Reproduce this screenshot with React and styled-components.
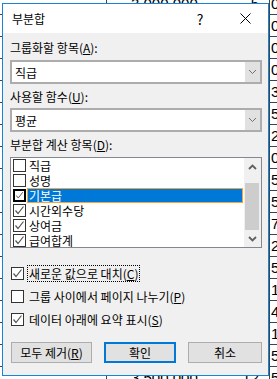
import React from 'react';
import styled, { createGlobalStyle } from 'styled-components';

const Global = createGlobalStyle`
  html, body { margin: 0; padding: 0; }
  body {
    width: 277px;
    height: 379px;
    overflow: hidden;
    background: #fff;
    font-family: "Noto Sans CJK KR", "Noto Sans", sans-serif;
  }
`;

const Screen = styled.div`
  position: relative;
  width: 277px;
  height: 379px;
  overflow: hidden;
  background: #fff;
`;

/* spreadsheet behind the dialog */
const Sheet = styled.div`
  display: flex;
  flex-direction: column;
  margin-top: -7px;
  font-family: "Liberation Sans", Arial, sans-serif;
  font-size: 15px;
  color: #000;
`;

const SheetRow = styled.div`
  display: grid;
  grid-template-columns: 107px 163px 1fr;
  height: 22px;
  box-sizing: border-box;
  border-bottom: 1px solid #3b4654;
`;

const SheetCell = styled.div`
  display: flex;
  align-items: center;
  justify-content: ${({ $spread }) => ($spread ? 'space-between' : 'flex-start')};
  padding: ${({ $spread }) => ($spread ? '0 10px 0 24px' : '0 0 0 1px')};
  border-right: ${({ $last }) => ($last ? 'none' : '1px solid #3b4654')};
  white-space: nowrap;
  overflow: hidden;
`;

/* dialog */
const Dialog = styled.div`
  position: absolute;
  left: 2px;
  top: 3px;
  width: 267px;
  height: 373px;
  box-sizing: border-box;
  border: 1px solid #1883d7;
  background: #f0f0f0;
  display: flex;
  flex-direction: column;
  color: #000;
  font-size: 12px;
`;

const TitleBar = styled.div`
  height: 29px;
  background: #fff;
  display: flex;
  align-items: center;
`;

const Title = styled.div`
  flex: 1;
  padding-left: 9px;
  font-size: 12px;
  line-height: 16px;
`;

const TitleButton = styled.div`
  width: ${({ $w }) => $w}px;
  height: 29px;
  display: flex;
  align-items: center;
  justify-content: center;
  font-size: 14px;
`;

const Body = styled.div`
  flex: 1;
  display: flex;
  flex-direction: column;
  padding: 7px 6px 0 7px;
`;

const Label = styled.div`
  line-height: 16px;
  margin-top: ${({ $mt }) => $mt || 0}px;
  white-space: nowrap;
`;

const Combo = styled.div`
  margin-top: ${({ $mt }) => $mt || 0}px;
  height: 24px;
  box-sizing: border-box;
  border: 2px solid #adadad;
  background: #fff;
  display: flex;
`;

const ComboText = styled.div`
  flex: 1;
  display: flex;
  align-items: center;
  padding-left: 3px;
`;

const ComboButton = styled.div`
  width: 15px;
  background: #e1e1e1;
  display: flex;
  align-items: center;
  justify-content: center;
`;

const ListBox = styled.div`
  margin-top: 4px;
  height: 91px;
  box-sizing: border-box;
  border: 1px solid #828790;
  background: #fff;
  display: flex;
  overflow: hidden;
`;

const Items = styled.div`
  flex: 1;
  display: flex;
  flex-direction: column;
  padding-left: 2px;
`;

const Item = styled.div`
  height: 15px;
  flex: none;
  display: flex;
  align-items: center;
`;

const ItemLabel = styled.div`
  flex: 1;
  height: 15px;
  margin: 0 1px;
  padding-left: 1px;
  box-sizing: border-box;
  display: flex;
  align-items: center;
  line-height: 13px;
  white-space: nowrap;
  background: ${({ $sel }) => ($sel ? '#0078d7' : 'transparent')};
  color: ${({ $sel }) => ($sel ? '#fff' : '#000')};
  border: 1px solid ${({ $sel }) => ($sel ? '#f7a33a' : 'transparent')};
`;

const Box = styled.div`
  width: 13px;
  height: 13px;
  flex: none;
  box-sizing: border-box;
  border: ${({ $focus }) => ($focus ? '2px solid #000' : '1px solid #333')};
  background: #fff;
  display: flex;
  align-items: center;
  justify-content: center;
`;

const ScrollBar = styled.div`
  width: 17px;
  display: flex;
  flex-direction: column;
  background: #f0f0f0;
`;

const ScrollArrow = styled.div`
  height: 17px;
  display: flex;
  align-items: center;
  justify-content: center;
`;

const ScrollTrack = styled.div`
  flex: 1;
  display: flex;
  flex-direction: column;
  padding: 8px 2px 0 1px;
`;

const Thumb = styled.div`
  height: 47px;
  background: #cdcdcd;
`;

const CheckRow = styled.div`
  margin-top: ${({ $mt }) => $mt}px;
  height: 18px;
  display: flex;
  align-items: center;
  padding-left: 1px;
`;

const CheckText = styled.div`
  margin-left: 3px;
  height: 17px;
  padding: 0 1px;
  box-sizing: border-box;
  display: flex;
  align-items: center;
  white-space: nowrap;
  border: 1px ${({ $focus }) => ($focus ? 'dotted #000' : 'solid transparent')};
`;

const Buttons = styled.div`
  margin-top: 14px;
  padding-left: 1px;
  display: flex;
  justify-content: space-between;
`;

const Button = styled.div`
  width: ${({ $w }) => $w}px;
  height: 21px;
  box-sizing: border-box;
  background: #e1e1e1;
  border: ${({ $default }) => ($default ? '2px solid #0078d7' : '1px solid #adadad')};
  display: flex;
  align-items: center;
  justify-content: center;
  white-space: nowrap;
`;

const Check = () => (
  <svg width="11" height="11" viewBox="0 0 11 11">
    <polyline points="1.5,5.5 4,8.5 9.5,1.5" fill="none" stroke="#555" strokeWidth="1.2" />
  </svg>
);

const Chevron = ({ up, bold }) => (
  <svg width="9" height="6" viewBox="0 0 9 6">
    <polyline
      points={up ? '1,5 4.5,1.5 8,5' : '1,1 4.5,4.5 8,1'}
      fill="none"
      stroke={bold ? '#606060' : '#707070'}
      strokeWidth={bold ? 1.8 : 1}
    />
  </svg>
);

const sheetRows = [
  ['3,000,000', '5', '0'], ['', '', '0'], ['', '', '0'], ['', '', '0'], ['', '', '3'],
  ['', '', '5'], ['', '', '2'], ['', '', '0'], ['', '', '5'], ['', '', '5'],
  ['', '', '7'], ['', '', '2'], ['', '', '5'], ['', '', '1'], ['', '', '4'],
  ['', '', '1'], ['', '', '5'], ['3,500,000', '12', '5'],
];

const items = [
  { name: '직급', checked: false },
  { name: '성명', checked: false },
  { name: '기본급', checked: true, sel: true },
  { name: '시간외수당', checked: true },
  { name: '상여금', checked: true },
  { name: '급여합계', checked: true },
];

export default function App() {
  return (
    <Screen>
      <Global />
      <Sheet>
        {sheetRows.map((r, i) => (
          <SheetRow key={i}>
            <SheetCell />
            <SheetCell $spread>
              <span>{r[0]}</span>
              <span>{r[1]}</span>
            </SheetCell>
            <SheetCell $last>{r[2]}</SheetCell>
          </SheetRow>
        ))}
      </Sheet>

      <Dialog>
        <TitleBar>
          <Title>부분합</Title>
          <TitleButton $w={44}>?</TitleButton>
          <TitleButton $w={46}>
            <svg width="11" height="11" viewBox="0 0 11 11">
              <path d="M0.5 0.5 L10.5 10.5 M10.5 0.5 L0.5 10.5" stroke="#000" strokeWidth="1" />
            </svg>
          </TitleButton>
        </TitleBar>
        <Body>
          <Label>그룹화할 항목(<u>A</u>):</Label>
          <Combo $mt={4}>
            <ComboText>직급</ComboText>
            <ComboButton><Chevron /></ComboButton>
          </Combo>
          <Label $mt={5}>사용할 함수(<u>U</u>):</Label>
          <Combo $mt={3}>
            <ComboText>평균</ComboText>
            <ComboButton><Chevron /></ComboButton>
          </Combo>
          <Label $mt={5}>부분합 계산 항목(<u>D</u>):</Label>
          <ListBox>
            <Items>
              {items.map((it) => (
                <Item key={it.name}>
                  <Box $focus={it.sel}>{it.checked && <Check />}</Box>
                  <ItemLabel $sel={it.sel}>{it.name}</ItemLabel>
                </Item>
              ))}
            </Items>
            <ScrollBar>
              <ScrollArrow><Chevron up bold /></ScrollArrow>
              <ScrollTrack><Thumb /></ScrollTrack>
              <ScrollArrow><Chevron bold /></ScrollArrow>
            </ScrollBar>
          </ListBox>
          <CheckRow $mt={16}>
            <Box><Check /></Box>
            <CheckText $focus>새로운 값으로 대치(<u>C</u>)</CheckText>
          </CheckRow>
          <CheckRow $mt={5}>
            <Box />
            <CheckText>그룹 사이에서 페이지 나누기(<u>P</u>)</CheckText>
          </CheckRow>
          <CheckRow $mt={5}>
            <Box><Check /></Box>
            <CheckText>데이터 아래에 요약 표시(<u>S</u>)</CheckText>
          </CheckRow>
          <Buttons>
            <Button $w={81}>모두 제거(<u>R</u>)</Button>
            <Button $w={72} $default>확인</Button>
            <Button $w={74}>취소</Button>
          </Buttons>
        </Body>
      </Dialog>
    </Screen>
  );
}
